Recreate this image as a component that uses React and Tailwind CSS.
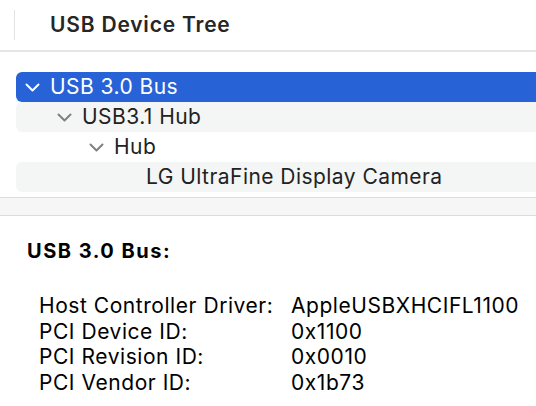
import React from 'react';

const font = { fontFamily: 'Inter, "Noto Sans", sans-serif' };

function Chevron({ selected }) {
  return (
    <svg width="15" height="9" viewBox="0 0 15 9" className="shrink-0">
      <path
        d="M1.5 1.5 L7.5 7.5 L13.5 1.5"
        fill="none"
        stroke={selected ? '#ffffff' : '#808080'}
        strokeWidth="2"
        strokeLinecap="round"
        strokeLinejoin="round"
      />
    </svg>
  );
}

const tree = [
  { label: 'USB 3.0 Bus', depth: 0, open: true, selected: true },
  { label: 'USB3.1 Hub', depth: 1, open: true, striped: true },
  { label: 'Hub', depth: 2, open: true },
  { label: 'LG UltraFine Display Camera', depth: 3, open: false, striped: true },
];

const details = [
  ['Host Controller Driver:', 'AppleUSBXHCIFL1100'],
  ['PCI Device ID:', '0x1100'],
  ['PCI Revision ID:', '0x0010'],
  ['PCI Vendor ID:', '0x1b73'],
];

export default function App() {
  return (
    <div className="w-[536px] h-[406px] bg-white overflow-hidden text-[#222]" style={font}>
      {/* Header */}
      <div className="h-[52px] flex items-center border-b-2 border-[#e6e6e6]">
        <div className="ml-[14px] w-px h-[30px] bg-[#e3e3e3]" />
        <h1 className="ml-[35px] text-[21px] font-semibold text-[#262626] tracking-[0.8px]">USB Device Tree</h1>
      </div>

      {/* Tree */}
      <div className="pt-[20px] pb-[5px]">
        {tree.map((row) => (
          <div
            key={row.label}
            className={`ml-[16px] h-[30px] flex items-center rounded-l-[6px] text-[21px] tracking-[0.45px] ${
              row.selected ? 'bg-[#2862d7] text-white' : row.striped ? 'bg-[#f4f5f5] text-[#222]' : 'text-[#222]'
            }`}
          >
            <div className="flex items-center" style={{ paddingLeft: 9 + row.depth * 32 }}>
              {row.open ? <Chevron selected={row.selected} /> : <div className="w-[15px]" />}
              <span className="ml-[10px]">{row.label}</span>
            </div>
          </div>
        ))}
      </div>

      {/* Splitter */}
      <div className="h-[19px] border-y border-[#dcdcdc] bg-[#f6f6f6]" />

      {/* Details */}
      <div className="pl-[27px] pt-[22px]">
        <h2 className="text-[20px] leading-[26px] font-bold tracking-[1.5px] text-black">USB 3.0 Bus:</h2>
        <div className="mt-[29px] pl-[12px] text-[21px] leading-[25.7px] tracking-[0.55px] text-black grid grid-cols-[252px_1fr]">
          {details.map(([k, v]) => (
            <React.Fragment key={k}>
              <span>{k}</span>
              <span>{v}</span>
            </React.Fragment>
          ))}
        </div>
      </div>
    </div>
  );
}
